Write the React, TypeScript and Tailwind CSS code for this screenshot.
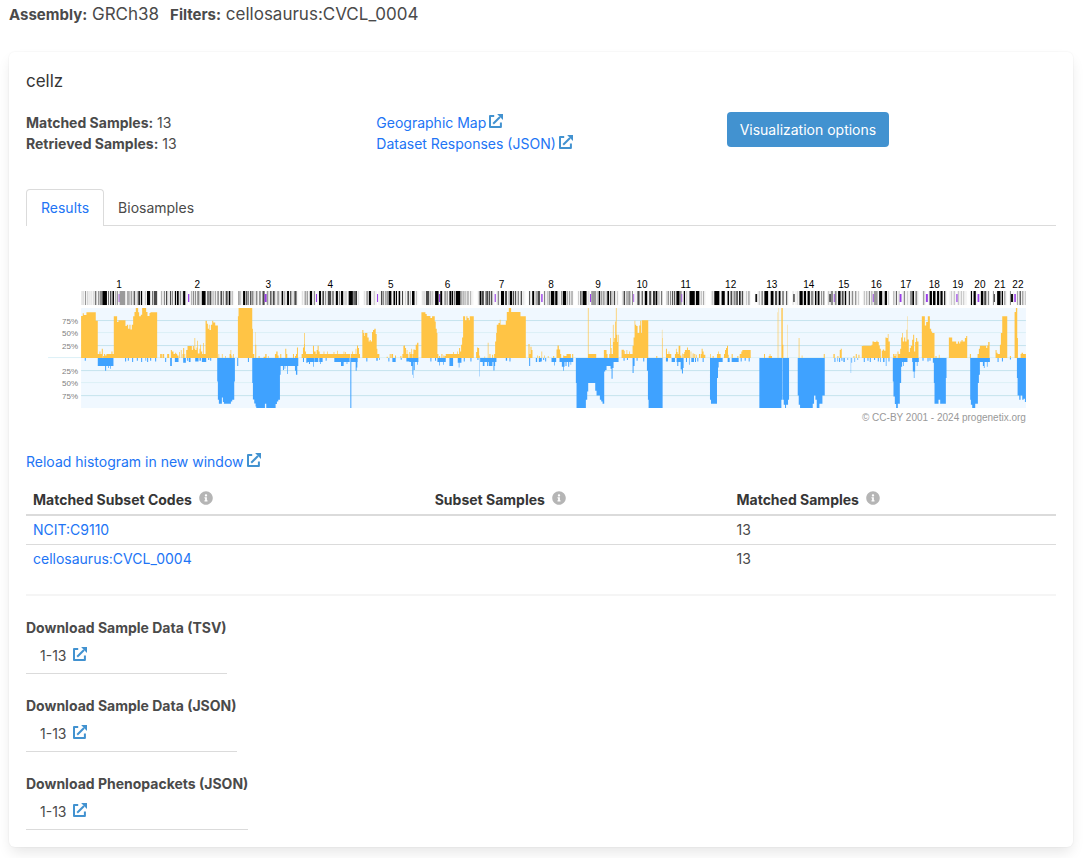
import React from "react";
import { FaInfoCircle } from "react-icons/fa";

type Stain = "n" | "a" | "b" | "c" | "k" | "v" | "x" | "s";

interface Chromosome {
  name: string;
  start: number;
  end: number;
  /** Space separated bands: a stain letter followed by the band's end position. */
  bands: string;
}

const STAIN_COLORS: Record<Stain, string> = {
  n: "#f4f4f4",
  a: "#c8c8c8",
  b: "#8c8c8c",
  c: "#4a4a4a",
  k: "#000000",
  v: "#9a9a9a",
  x: "#9a3ee8",
  s: "#111111",
};

const CHROMOSOMES: Chromosome[] = [
  { name: "1", start: 81, end: 157, bands: "n2 a5 n7 a9 n13 b16 n20 a24 n28 a30 n32 a34 n40 a44 n46 c50 n55 b58 n60 b68 n69 k84 n88 c91 n94 c99 n102 k107 n111 b115 n117 b120 n122 x125 v144 n150 b155 n157 b159 n161 b165 n168 b171 n173 k176 n181 b184 n186 k191 n194 k199 n207 a211 n214 k224 n225 a227 n231 c234 n236 c247" },
  { name: "2", start: 160, end: 234, bands: "n4 b7 n12 b16 n19 c24 n28 a30 n32 c36 n38 b42 n48 k53 n55 k61 n64 b68 n71 b73 n75 k83 n91 x96 n102 b105 n107 b112 n114 b118 n121 b129 n132 a134 n136 k149 n154 c159 n161 c168 n170 a178 n180 b183 n188 k191 n197 c203 n205 b209 n214 c221 n224 k230 n234 b237 n242" },
  { name: "3", start: 238, end: 298, bands: "b3 n4 b8 n12 a13 n16 k24 n26 c31 n32 b36 n39 c44 n45 b51 n52 a54 n58 b64 n70 c74 n80 c87 x94 v99 n100 a103 n106 k110 n114 c118 n119 c122 n124 a126 n129 b134 n136 a139 n143 k149 n152 b155 n157 b159 n161 k168 n171 c176 n179 a183 n185 c193 n198" },
  { name: "4", start: 301, end: 359, bands: "n4 a6 n11 b15 n18 c21 n28 k36 n41 b45 n48 x52 n58 k65 n69 c75 n78 b81 n83 a86 n87 c98 n100 b107 n113 k120 n123 b128 n130 k138 n141 a146 n147 a150 n155 k169 n171 k175 n177 k182 n186 a188 n190" },
  { name: "5", start: 363, end: 418, bands: "n4 a6 n10 b15 n18 k26 n34 a38 n45 x49 n58 c63 n64 b69 n72 b77 n78 b81 n83 k93 n99 k105 n107 k111 n116 k122 n128 k131 n137 a140 n145 c150 n153 b156 n160 k169 n173 a177 n181" },
  { name: "6", start: 421, end: 473, bands: "n2 a4 n7 a11 n12 a13 n15 c25 n27 b31 n33 a40 n45 k57 n58 x62 k69 n75 v83 n84 b87 n92 k99 n100 k105 n108 c111 n113 k129 n132 c135 n138 b142 n145 b148 n152 c155 n161 b164 n171" },
  { name: "7", start: 477, end: 525, bands: "n3 a5 n7 k14 n16 k21 n25 b28 n29 c35 n37 c43 n45 c50 n57 x61 n67 b72 n78 k88 n91 c98 n103 b105 n107 k115 n117 c121 n124 k127 n129 a131 n133 b138 n143 c148 n153 a155 n159" },
  { name: "8", start: 528, end: 573, bands: "n2 c6 n12 k19 n23 b27 n29 c37 n41 x46 n51 c54 n60 b62 n65 b70 n72 k84 n86 k94 n97 a100 n105 b110 n111 k122 n125 b128 n131 b135 n139 c142 n145" },
  { name: "9", start: 577, end: 618, bands: "n2 a5 n9 c14 n17 k31 n37 a40 n42 x46 v63 n65 a69 n71 k77 n79 b82 n85 c88 n90 b92 n95 b98 n100 k106 n109 k112 n114 b118 n122 c127 n133 a136 n138" },
  { name: "10", start: 621, end: 662, bands: "n2 a4 n6 c11 n15 c18 n20 b27 n31 b34 n35 x38 n47 c54 n60 k63 n69 k77 n82 c89 n94 k99 n101 k107 n110 b113 n118 c121 n122" },
  { name: "11", start: 665, end: 705, bands: "n2 a5 n6 b10 n13 b17 n20 k23 n26 k29 n32 k42 n44 c47 x50 n54 k58 n61 a65 n71 k87 n90 k101 n104 a109 n112 b115 n119" },
  { name: "12", start: 710, end: 750, bands: "n3 a9 n11 k27 n33 k43 n51 k56 n60 c66 n69 b76 n78 k82 n86 k91 n94 c99 n107 a111 n114 b118 n121" },
  { name: "13", start: 754, end: 788, bands: "n2 s8 n12 a16 n20 b25 n29 k41 n48 k57 n61 c68 n72 k78 n82 b88 n95 k98 n102" },
  { name: "14", start: 792, end: 824, bands: "a2 s6 n14 a16 n20 k30 n33 k40 n44 k51 n54 b62 n66 k71 n74 k80 n84 b88 n91 c94 n95" },
  { name: "15", start: 827, end: 859, bands: "a5 s9 b16 n18 x21 b27 n31 k39 n42 c48 n51 k56 n63 c67 n72 b77 n83 c86 n91 a94 n96" },
  { name: "16", start: 862, end: 889, bands: "n3 a7 n11 b14 n18 b22 n26 b29 n30 x33 v45 n49 k59 n62 a66 k73 n76 a79 n81" },
  { name: "17", start: 892, end: 918, bands: "n2 b5 n9 c12 n17 a20 x26 n32 b36 n42 a45 n52 k55 n57 k62 n66 b72 n76" },
  { name: "18", start: 921, end: 946, bands: "n4 b8 n12 x18 n23 k30 n33 k41 n45 k52 n55 k62 n66 k70 n74" },
  { name: "19", start: 948, end: 966, bands: "n6 a9 n14 a18 n22 x26 a31 n35 a39 n42 a46 n53" },
  { name: "20", start: 969, end: 989, bands: "n3 k7 n11 k18 n23 x29 n33 k41 n43 c50 n54 b58 n60" },
  { name: "21", start: 992, end: 1006, bands: "b3 s6 n13 k24 n27 k31 n35 b39 n43" },
  { name: "22", start: 1009, end: 1025, bands: "b3 s10 n13 x18 n22 b25 n29 c33 n37 b41 n45 b47 n48" },
];

/** Each block of samples starts at `offset`; runs are "from to height" in thirds of a unit. */
interface Block {
  offset: number;
  runs: string;
}

const GAINS: Block[] = [
  {
    offset: 40,
    runs:
      "123 128 126,128 131 134,131 133 129,133 139 129,139 167 137,167 173 112,173 178 12,178 181 20,181 185 12,185 188 28,189 192 6,192 195 12,195 199 8,199 221 12,214 217 20,221 231 125,231 235 108,235 256 113,256 260 96,260 264 100,264 268 88,268 271 100,271 275 86,275 279 100,279 283 125,283 287 138,287 294 150,294 297 137,297 302 125,302 306 130,306 318 150,318 322 138,322 328 126,328 331 135,331 351 137," +
      "360 365 12,367 372 12,381 387 12,392 395 24,395 400 20,400 405 12,405 408 16,408 411 12,411 415 8,417 419 18,422 424 24,427 429 12,429 432 30,433 435 12,438 442 24,442 455 36,455 458 24,458 461 36,461 463 28,463 465 60,465 469 24,469 471 32,471 473 52,473 478 14,478 480 28,480 482 40,482 486 20,486 489 12,489 491 45,491 496 12,496 500 112,500 503 103,503 506 88,506 508 100,508 512 84,512 516 100,516 519 112,519 525 107,525 533 98,535 537 12,545 547 12,555 557 6,568 571 12,571 573 24,574 576 8,579 581 12," +
      "593 595 125,595 636 150,636 638 88,638 642 12,645 646 78,646 648 40,655 658 6,670 675 4,675 679 12,683 685 6,704 708 12,708 712 20,712 715 8,720 723 12,735 738 28,738 741 12",
  },
  {
    offset: 290,
    runs:
      "8 11 12,14 17 6,17 20 12,20 23 32,34 38 12,38 41 32,41 42 42,42 44 75,44 47 20,47 68 12,68 71 37,71 76 20,76 79 12,79 82 24,82 85 37,85 88 20,88 180 12,100 102 20,110 112 20,130 132 18,141 143 22,160 162 20,165 167 18,182 200 12,186 188 20,196 198 28,200 203 38,203 206 30,206 209 12," +
      "216 219 84,219 222 75,222 224 66,224 231 75,231 235 62,235 238 50,238 241 54,241 245 50,245 248 78,248 252 84,252 256 88,256 259 72,259 261 28,261 267 12,289 292 4,298 301 12,303 308 12,314 317 8,330 333 6,336 339 12,339 341 37,341 344 38,344 347 30,347 349 12,349 351 24,351 354 12,357 360 18,360 363 12,363 365 28,366 369 12,369 373 26,373 376 24,376 380 40,380 384 46," +
      "393 405 137,405 409 132,409 420 126,420 425 120,425 433 125,433 436 110,436 439 88,439 441 75,441 444 12,446 449 6,453 456 12,459 462 8,463 466 6,466 506 12,488 490 18,500 502 20,506 509 30,509 512 20,512 515 40,515 518 62,518 524 125,524 528 113,528 531 125,531 535 120,535 538 113,538 550 125," +
      "557 560 18,560 563 32,563 566 30,566 568 8,582 584 5,592 594 46,597 600 12,605 608 10,611 614 12,614 617 50,617 619 75,619 624 100,624 628 105,628 630 115,630 646 100,646 649 112,649 655 138,655 662 150,662 690 138,690 706 125,714 717 42,717 720 12,720 723 34,723 726 24,740 742 8,745 748 6",
  },
  {
    offset: 540,
    runs:
      "3 5 20,11 13 8,22 24 6,38 41 6,48 51 26,51 55 38,55 59 26,59 62 12,68 71 8,71 78 6,78 91 12,95 98 12,142 144 150,144 167 12,190 198 24,198 201 12,206 209 12,209 211 60,211 213 30,213 217 12,217 219 100,219 221 48,221 224 60,224 226 110,226 228 150,228 230 70,230 232 48,232 234 70," +
      "243 250 25,250 276 12,251 253 22,258 260 24,266 268 20,276 279 37,279 282 62,282 284 112,284 287 100,287 291 96,291 296 75,296 299 98,299 302 112,302 304 75,304 323 113,347 350 6,364 365 85,365 366 60," +
      "376 379 28,379 392 12,384 386 20,403 406 12,406 408 28,408 411 18,411 414 12,414 419 37,419 422 8,424 426 14,428 431 12,431 433 18,433 439 24,439 442 32,442 448 24,450 452 20,456 459 14,461 464 12,467 469 10,475 478 12,480 483 12,483 486 28,486 489 20,489 494 10," +
      "509 511 12,516 519 6,529 540 12,533 535 20,550 553 12,553 556 24,556 559 30,559 562 37,562 564 10,573 576 12,590 593 6,597 602 12,602 605 20,605 630 24,670 673 12,684 694 6,687 689 12,711 712 137,714 715 150,722 726 150,726 728 40,739 740 100",
  },
  {
    offset: 790,
    runs:
      "24 26 60,33 35 8,99 102 12,128 132 12,140 143 6,147 150 24,150 153 28,188 191 6,195 198 12,203 206 10,213 217 36,217 242 37,242 245 40,245 250 50,250 257 48,257 260 52,260 264 48,264 267 38,267 270 28,273 276 22,276 280 26,280 284 22,284 287 62,287 291 60,291 293 72,293 297 50," +
      "307 311 12,311 314 6,314 317 12,320 323 20,323 328 12,328 331 28,331 334 62,334 336 75,336 340 50,340 343 62,343 347 50,347 349 85,349 350 125,350 354 56,354 357 18,357 360 30,360 364 37,364 367 55,367 370 70,370 373 20,373 376 48,376 379 60,379 383 50," +
      "393 402 125,402 406 98,406 411 108,411 417 125,417 421 88,421 424 80,424 431 75,434 437 6,444 446 10,474 484 62,484 496 50,496 501 43,501 505 50,505 508 44,508 512 50,512 515 54,515 522 50,522 526 60,526 529 66," +
      "537 540 12,560 564 12,564 567 28,567 586 37,586 589 30,589 592 38,592 596 48,614 617 24,617 620 16,620 627 12,627 630 40,630 634 75,634 649 125,657 660 6,671 675 138,675 679 150,679 681 60,689 692 12,692 696 16,696 705 12",
  },
];

const LOSSES: Block[] = [
  {
    offset: 40,
    runs:
      "134 137 8,173 220 24,195 198 38,204 206 30,210 212 32,255 258 10,263 266 8,276 279 12,290 293 8,303 306 12,316 318 8,321 324 12,330 333 8,345 348 10,375 378 12,390 395 24,404 415 12,429 437 14,441 444 8,446 451 12,465 475 10,478 482 8,485 498 12,504 507 6,510 513 8," +
      "531 533 70,533 536 125,536 545 137,545 548 118,548 551 132,551 572 137,572 576 130,576 582 125,582 584 70,591 594 24,623 626 12,636 638 75,638 642 124,642 646 136,646 648 145,648 674 150,674 678 137,678 706 150,706 710 138,710 714 130,714 719 125,719 721 50,721 750 24,728 731 36,733 735 32,741 743 48",
  },
  {
    offset: 290,
    runs:
      "0 14 24,14 17 38,17 21 50,21 24 24,38 41 12,48 52 14,52 69 12,56 59 18,69 71 26,72 84 12,87 97 12,90 92 18,106 109 8,132 178 12,152 160 24,169 171 18,180 183 150,183 202 12,196 199 38,199 201 28,228 231 10,258 262 8,266 268 6,294 297 10,306 316 12,331 334 5,348 357 10,357 384 12,362 366 24,366 368 50,369 370 60,370 373 36,380 382 20," +
      "420 423 10,434 437 8,441 466 12,446 448 22,458 460 20,477 488 24,502 513 14,505 507 28,520 523 10,540 543 10,561 564 6,567 568 55,569 618 12,577 582 24,590 593 24,595 606 24,609 612 37,612 614 24,646 650 8,657 660 10,716 719 24,736 740 12,745 750 12",
  },
  {
    offset: 540,
    runs:
      "0 4 10,8 11 6,14 17 10,33 47 12,41 43 22,57 98 12,64 72 26,68 70 38,75 78 24,83 86 26,90 92 20,106 108 75,108 136 150,136 140 125,140 143 100,143 164 75,164 168 98,168 178 112,178 182 125,182 186 130,186 191 137,191 194 40,194 198 36,198 210 24,210 213 32,213 216 62,216 219 30,219 234 12," +
      "249 252 8,259 262 6,276 279 45,279 282 24,288 291 8,308 311 10,319 322 38,322 324 125,324 366 150,376 382 10,393 403 12,408 420 12,410 413 24,420 424 34,424 427 46,427 429 30,436 439 12,445 447 20,452 460 12,463 466 12,470 473 10,486 489 12," +
      "508 511 125,511 529 137,529 532 60,532 546 12,533 535 28,561 567 12,573 594 12,600 603 10,612 615 8,624 627 10,656 722 150,722 725 125,726 729 125,729 733 140,733 736 150,736 742 140,742 745 125",
  },
  {
    offset: 790,
    runs:
      "21 24 112,24 28 140,28 66 150,66 70 137,70 74 112,74 78 125,78 86 150,86 95 137,95 102 112,131 134 12,140 142 10,145 148 12,152 155 8,158 162 12,170 172 6,180 181 45,182 184 14,191 193 12,200 202 6,219 222 12,230 233 8,237 240 12,250 253 6,261 264 10,268 270 12,277 281 12,285 287 24,293 296 10," +
      "306 308 70,308 312 115,312 316 138,316 321 150,321 327 137,327 331 75,331 334 26,334 350 12,337 339 24,364 384 12,366 369 40,369 371 60,371 373 40,378 380 24,395 398 8,410 413 10,416 419 8,426 429 14,429 431 75,431 443 137,443 448 125,448 465 137,465 467 60," +
      "538 540 125,540 544 140,544 553 150,553 561 137,561 564 75,564 567 50,567 597 12,576 579 24,579 581 30,588 590 26,620 623 12,633 636 10,657 660 4,678 680 60,680 685 112,685 689 125,689 694 112,694 698 125,698 702 122,702 705 132",
  },
];

const BASELINE = 88;

function buildPath(blocks: Block[], direction: 1 | -1): string {
  return blocks
    .flatMap(({ offset, runs }) =>
      runs.split(",").map((run) => {
        const [from, to, height] = run.split(" ").map(Number);
        const x = (offset + from / 3).toFixed(2);
        const width = ((to - from) / 3).toFixed(2);
        const rise = ((height / 3) * direction).toFixed(2);
        return `M${x} ${BASELINE}v${rise}h${width}V${BASELINE}z`;
      }),
    )
    .join("");
}

function Ideogram({ start, end, bands }: Chromosome) {
  const items = bands.split(" ").map((band) => ({
    stain: band[0] as Stain,
    stop: Number(band.slice(1)),
  }));
  const scale = (end - start) / items[items.length - 1].stop;
  return (
    <>
      {items.map(({ stain, stop }, i) => {
        const from = i === 0 ? 0 : items[i - 1].stop;
        const narrow = stain === "x" || stain === "s";
        return (
          <rect
            key={i}
            x={start + from * scale}
            y={narrow ? 24 : 21}
            width={(stop - from) * scale}
            height={narrow ? 8 : 14}
            fill={STAIN_COLORS[stain]}
          />
        );
      })}
    </>
  );
}

const GRID = [
  { y: 50, label: "75%", color: "#c5e3ee" },
  { y: 62, label: "50%", color: "#dcf0f7" },
  { y: 75, label: "25%", color: "#c5e3ee" },
  { y: 100, label: "25%", color: "#c5e3ee" },
  { y: 112, label: "50%", color: "#dcf0f7" },
  { y: 125, label: "75%", color: "#c5e3ee" },
];

function Histogram() {
  return (
    <svg
      viewBox="26 0 1029 160"
      className="block w-full font-['Liberation_Sans',Arial,sans-serif]"
      role="img"
      aria-label="CNV frequencies by chromosome"
    >
      <rect x={81} y={38} width={944} height={100} fill="#f0f8ff" />
      <rect x={48} y={87} width={977} height={1} fill="#dcf0f7" />
      {GRID.map(({ y, label, color }) => (
        <g key={y}>
          <rect x={81} y={y} width={944} height={1} fill={color} />
          <text x={78} y={y + 4} textAnchor="end" fontSize={8} fill="#808080">
            {label}
          </text>
        </g>
      ))}
      <path d={buildPath(GAINS, -1)} fill="#ffc445" />
      <path d={buildPath(LOSSES, 1)} fill="#3fa2ff" />
      {CHROMOSOMES.map((chromosome) => (
        <g key={chromosome.name}>
          <text
            x={(chromosome.start + chromosome.end) / 2}
            y={18}
            textAnchor="middle"
            fontSize={10}
            fill="#000000"
          >
            {chromosome.name}
          </text>
          <Ideogram {...chromosome} />
        </g>
      ))}
      <text x={1025} y={151} textAnchor="end" fontSize={10} fill="#999999">
        © CC-BY 2001 - 2024 progenetix.org
      </text>
    </svg>
  );
}

function ExternalIcon() {
  return (
    <svg viewBox="0 0 14 14" className="ml-[3px] inline-block size-3.5 shrink-0 align-[0px]" aria-hidden="true">
      <path d="M5.2 2.1H1v10.9h10.9V8.4" fill="none" stroke="#4292d0" strokeWidth="2" strokeLinejoin="round" />
      <path d="M4.2 9.8 11 3" stroke="#4292d0" strokeWidth="2" />
      <path d="M8.1 0H14v5.9z" fill="#4292d0" />
    </svg>
  );
}

function InfoHeader({ children }: { children: string }) {
  return (
    <th scope="col" className="border-b-2 border-[#dbdbdb] px-[7px] pt-[3px] pb-1 text-left font-bold text-[#363636]">
      {children}
      <FaInfoCircle className="ml-[7px] inline-block size-3.5 align-[0px] text-[#b5b5b5]" aria-hidden="true" />
    </th>
  );
}

const SUBSETS = [
  { code: "NCIT:C9110", matched: 13 },
  { code: "cellosaurus:CVCL_0004", matched: 13 },
];

const DOWNLOADS = [
  "Download Sample Data (TSV)",
  "Download Sample Data (JSON)",
  "Download Phenopackets (JSON)",
];

export default function App() {
  return (
    <main className="pt-px pr-2.5 pb-3 pl-[9px] font-[Inter,sans-serif] text-sm leading-[21px] text-[#4a4a4a]">
      <p className="flex gap-[11px] text-[17px] leading-[26px]">
        <span>
          <strong className="text-[15px] font-bold">Assembly:</strong> GRCh38
        </span>
        <span>
          <strong className="text-[15px] font-bold">Filters:</strong> cellosaurus:CVCL_0004
        </span>
      </p>

      <section className="mt-6 rounded-md bg-white px-[17px] pt-4 pb-[17px] shadow-[0_7px_14px_-2px_rgba(10,10,10,0.1),0_0_0_1px_rgba(10,10,10,0.02)]">
        <h2 className="text-[17px] leading-[26px] text-[#363636]">cellz</h2>

        <div className="mt-[18px] grid grid-cols-3 gap-[21px]">
          <div>
            <div>
              <b className="font-bold">Matched Samples:</b> 13
            </div>
            <div>
              <b className="font-bold">Retrieved Samples:</b> 13
            </div>
          </div>
          <div>
            <div>
              <a href="#map" className="text-[#2174f5]">
                Geographic Map
                <ExternalIcon />
              </a>
            </div>
            <div>
              <a href="#responses" className="text-[#2174f5]">
                Dataset Responses (JSON)
                <ExternalIcon />
              </a>
            </div>
          </div>
          <div>
            <button type="button" className="h-[35px] rounded bg-[#4292d0] px-[13px] text-white">
              Visualization options
            </button>
          </div>
        </div>

        <nav className="mt-[35px] flex border-b border-[#dbdbdb]">
          <a
            href="#results"
            className="-mb-px rounded-t border border-b-0 border-[#dbdbdb] bg-white px-3.5 pt-[7px] pb-2 text-[#2174f5]"
          >
            Results
          </a>
          <a href="#biosamples" className="px-3.5 pt-2 pb-[7px]">
            Biosamples
          </a>
        </nav>

        <div className="mt-11">
          <Histogram />
        </div>

        <div className="mt-[21px]">
          <a href="#histogram" className="text-[#2174f5]">
            Reload histogram in new window
            <ExternalIcon />
          </a>
        </div>

        <table className="mt-[14px] w-full table-fixed border-collapse">
          <colgroup>
            <col className="w-[39%]" />
            <col className="w-[29.3%]" />
            <col />
          </colgroup>
          <thead>
            <tr>
              <InfoHeader>Matched Subset Codes</InfoHeader>
              <InfoHeader>Subset Samples</InfoHeader>
              <InfoHeader>Matched Samples</InfoHeader>
            </tr>
          </thead>
          <tbody>
            {SUBSETS.map(({ code, matched }) => (
              <tr key={code} className="border-b border-[#dbdbdb] last:border-b-0">
                <td className="px-[7px] pt-[3px] pb-1">
                  <a href={`#${code}`} className="text-[#2174f5]">
                    {code}
                  </a>
                </td>
                <td className="px-[7px] pt-[3px] pb-1" />
                <td className="px-[7px] pt-[3px] pb-1">{matched}</td>
              </tr>
            ))}
          </tbody>
        </table>

        <hr className="mt-[21px] h-0.5 border-0 bg-[#f5f5f5]" />

        <div className="mt-[21px] flex flex-col items-start gap-[21px]">
          {DOWNLOADS.map((title) => (
            <div key={title}>
              <h3 className="font-bold">{title}</h3>
              <div className="border-b border-[#dbdbdb] px-3.5 pt-[7px] pb-[7px]">
                <a href="#download">
                  1-13 <ExternalIcon />
                </a>
              </div>
            </div>
          ))}
        </div>
      </section>
    </main>
  );
}
